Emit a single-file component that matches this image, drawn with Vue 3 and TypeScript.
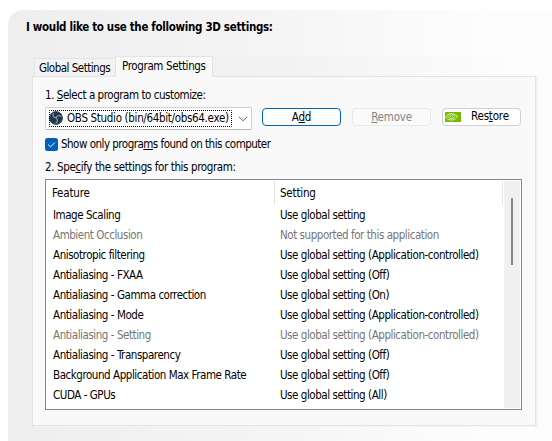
<script setup lang="ts">
interface Row {
  feature: string
  setting: string
  disabled?: boolean
}

const rows: Row[] = [
  { feature: 'Image Scaling', setting: 'Use global setting' },
  { feature: 'Ambient Occlusion', setting: 'Not supported for this application', disabled: true },
  { feature: 'Anisotropic filtering', setting: 'Use global setting (Application-controlled)' },
  { feature: 'Antialiasing - FXAA', setting: 'Use global setting (Off)' },
  { feature: 'Antialiasing - Gamma correction', setting: 'Use global setting (On)' },
  { feature: 'Antialiasing - Mode', setting: 'Use global setting (Application-controlled)' },
  { feature: 'Antialiasing - Setting', setting: 'Use global setting (Application-controlled)', disabled: true },
  { feature: 'Antialiasing - Transparency', setting: 'Use global setting (Off)' },
  { feature: 'Background Application Max Frame Rate', setting: 'Use global setting (Off)' },
  { feature: 'CUDA - GPUs', setting: 'Use global setting (All)' },
]
</script>

<template>
  <main class="page">
    <section class="sheet">
      <h1 class="title"><span>I would like to use the following 3D settings:</span></h1>
      <div class="tabs">
        <div class="tab tab-global"><span>Global Settings</span></div>
        <div class="tab tab-program"><span>Program Settings</span></div>
      </div>
      <div class="panel">
        <div class="label step-one"><span>1. <u>S</u>elect a program to customize:</span></div>
        <div class="controls">
          <div class="combo">
            <div class="focus">
              <svg class="focus-ring" width="183" height="17" viewBox="0 0 183 17">
                <rect x=".5" y=".5" width="182" height="16" fill="none" stroke="#000" stroke-dasharray="1 1" stroke-dashoffset=".5" />
              </svg>
              <svg class="obs" width="14" height="14" viewBox="0 0 14 14">
                <circle cx="7" cy="7" r="6.8" fill="#20364c" />
                <circle cx="7" cy="7" r="6.3" fill="none" stroke="#41566a" stroke-width=".7" />
                <g fill="none" stroke="#8fa5b6" stroke-width="1.1" stroke-linecap="round">
                  <path d="M4.2 2.5C3.5 4.5 4.4 6.3 6.8 6.7" />
                  <path d="M11.8 5.4C10.3 4 8 4.5 7.2 6.8" />
                  <path d="M6.8 12C8.6 11.2 9.2 8.9 7.3 7.3" />
                </g>
              </svg>
              <span class="combo-text">OBS Studio (bin/64bit/obs64.exe)</span>
            </div>
            <svg class="chevron" width="10" height="6" viewBox="0 0 10 6">
              <path d="M1 .8 5 4.8 9 .8" fill="none" stroke="#555" />
            </svg>
          </div>
          <div class="button primary"><span>A<u>d</u>d</span></div>
          <div class="button inactive"><span><u>R</u>emove</span></div>
          <div class="button restore">
            <svg width="16" height="10" viewBox="0 0 16 10">
              <rect width="16" height="10" fill="#76b900" />
              <path d="M.7 4.8C3 1.3 8 .5 12.5 4.2 10.5 8.8 3.5 9.6.7 4.8Z" fill="none" stroke="#e4f2c8" stroke-width=".9" />
              <path d="M3 4.7C4.5 2.3 8 2.3 10 4.6 8.2 7.5 4.8 7.6 3 4.7Z" fill="none" stroke="#e4f2c8" stroke-width=".8" />
              <path d="M5.2 4.3 6.6 5.6 8 4.3" fill="none" stroke="#e4f2c8" stroke-width=".9" />
            </svg>
            <span>Res<u>t</u>ore</span>
          </div>
        </div>
        <div class="check">
          <svg width="13" height="13" viewBox="0 0 13 13">
            <rect width="13" height="13" rx="2.5" fill="#005fb8" />
            <path d="M3.2 6.6 5.5 8.9 9.8 4.6" fill="none" stroke="#fff" />
          </svg>
          <span>Show only progra<u>m</u>s found on this computer</span>
        </div>
        <div class="label step-two"><span>2. Spe<u>c</u>ify the settings for this program:</span></div>
        <div class="list">
          <div class="table">
            <div class="header">
              <div class="col-feature">Feature</div>
              <div class="col-setting">Setting</div>
            </div>
            <div v-for="row in rows" :key="row.feature" class="row" :class="{ disabled: row.disabled }">
              <div class="feature"><span>{{ row.feature }}</span></div>
              <div class="setting"><span>{{ row.setting }}</span></div>
            </div>
          </div>
          <div class="scrollbar"><div class="thumb"></div></div>
        </div>
      </div>
    </section>
  </main>
</template>

<style>
body {
  margin: 0;
  background: #fff;
}
</style>

<style scoped>
* {
  box-sizing: border-box;
}
.page {
  width: 552px;
  height: 441px;
  padding: 10px 0 0 8px;
  overflow: hidden;
  font: 11.5px/16px "DejaVu Sans Condensed", "Noto Sans", sans-serif;
  letter-spacing: -0.45px;
  color: #000;
  white-space: nowrap;
}
u {
  text-decoration: underline;
  text-decoration-thickness: 1px;
  text-underline-offset: 1px;
  text-decoration-skip-ink: none;
}
.sheet {
  height: 431px;
  border-top-left-radius: 15px;
  background: linear-gradient(90deg, #eee, #f5f5f5 50%, #fdfdfd 88%, #fdfdfd);
}
.title {
  height: 46px;
  margin: 0;
  padding: 9px 0 0 18px;
  font-size: 11.5px;
  font-weight: 700;
  letter-spacing: -0.32px;
}
.tabs {
  display: flex;
  align-items: flex-end;
  width: 504px;
  height: 20px;
  margin-left: 26px;
  background: linear-gradient(90deg, #eee, #f2f2f2 50%, #f8f8f8 75%, #fefefe);
}
.tab {
  border: 1px solid #e3e3e3;
  border-bottom: 0;
}
.tab-global {
  width: 81px;
  height: 18px;
  padding: 1px 0 0 4px;
  border-right: 0;
  background: #f3f3f3;
  letter-spacing: -0.51px;
}
.tab-program {
  width: 98px;
  height: 21px;
  margin-bottom: -1px;
  padding: 1px 0 0 6px;
  background: #f9f9f9;
  z-index: 1;
  letter-spacing: -0.36px;
}
.panel {
  width: 504px;
  height: 350px;
  margin-left: 24px;
  padding: 10px 13px 0 12px;
  border: 1px solid #e3e3e3;
  background: #f9f9f9;
  box-shadow: 2px 1px 0 #f3f3f3;
}
.label {
  height: 16px;
}
.controls {
  display: flex;
  align-items: flex-start;
  height: 23px;
  margin-top: 4px;
}
.combo {
  display: flex;
  align-items: center;
  width: 207px;
  height: 23px;
  margin-right: 10px;
  border: 1px solid #d0d0d0;
  border-bottom-color: #b8b8b8;
  border-radius: 2px;
  background: #fff;
}
.focus {
  display: flex;
  align-items: center;
  position: relative;
  width: 183px;
  height: 17px;
  margin: 0 6px 1px 3px;
}
.focus-ring {
  position: absolute;
  inset: 0;
}
.obs {
  flex: none;
  margin-right: 4px;
}
.combo-text {
  letter-spacing: -0.32px;
}
.button {
  width: 79px;
  height: 18px;
  margin: 1px 11px 0 0;
  border: 1px solid #d0d0d0;
  border-radius: 4px;
  background: #fefefe;
  text-align: center;
  flex: none;
  letter-spacing: -0.2px;
}
.primary {
  border-color: #0067b8;
}
.inactive {
  border-color: #e9e9e9;
  background: #fafafa;
  color: #858585;
}
.restore {
  display: flex;
  align-items: center;
  gap: 10px;
  margin-right: 0;
  padding-left: 2px;
}
.restore span {
  margin-top: -2px;
}
.check {
  display: flex;
  align-items: center;
  gap: 3px;
  height: 16px;
  margin-top: 6px;
  letter-spacing: -0.51px;
}
.step-two {
  margin-top: 7px;
  letter-spacing: -0.38px;
}
.list {
  display: flex;
  width: 477px;
  height: 231px;
  margin-top: 4px;
  padding: 1px;
  border: 1px solid #828790;
  background: #fff;
}
.table {
  width: 457px;
}
.header {
  display: flex;
  height: 24px;
  line-height: 24px;
  letter-spacing: -0.2px;
}
.col-feature {
  width: 228px;
  padding-left: 5px;
  border-right: 1px solid #e3e3e3;
}
.col-setting {
  width: 228px;
  padding-left: 5px;
  border-right: 1px solid #e3e3e3;
}
.row {
  display: flex;
  height: 20px;
  line-height: 20px;
}
.feature {
  width: 227px;
  padding-left: 6px;
}
.setting {
  padding-left: 6px;
}
.disabled {
  color: #767676;
}
.scrollbar {
  width: 16px;
  height: 227px;
  padding: 17px 0 0 7px;
  background: #f0f0f0;
}
.thumb {
  width: 2px;
  height: 67px;
  background: #858585;
}
</style>
